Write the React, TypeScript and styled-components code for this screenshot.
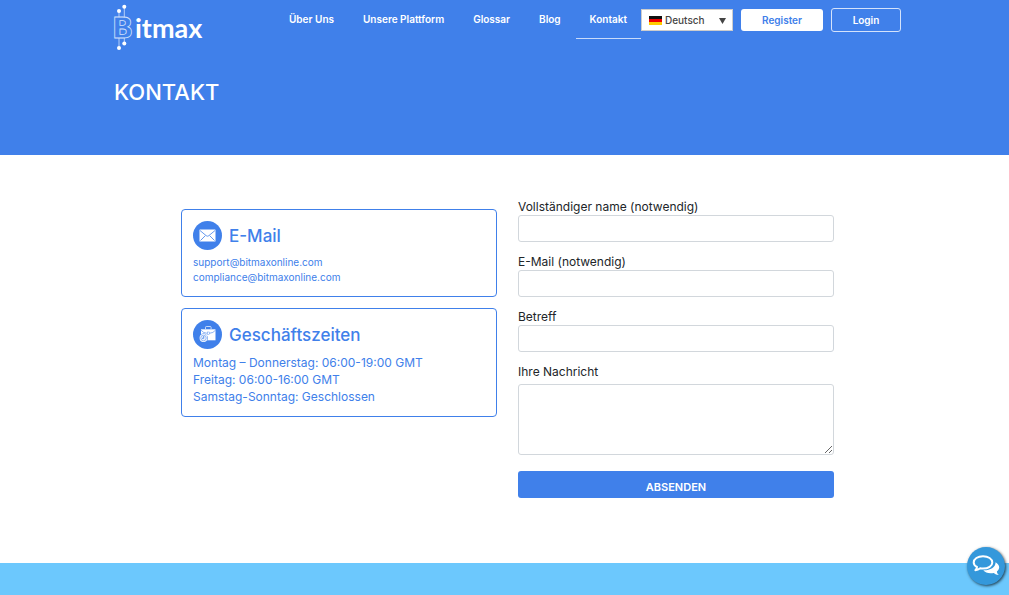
import React from 'react';
import styled, { createGlobalStyle } from 'styled-components';

const blue = '#4080ea';

const GlobalStyle = createGlobalStyle`
  * { box-sizing: border-box; }
  body {
    margin: 0;
    background: #fff;
    color: #212529;
    font-family: Inter, "Liberation Sans", sans-serif;
    font-size: 12px;
  }
  button, input, textarea, select { font: inherit; }
`;

const Page = styled.div`
  display: flex;
  flex-direction: column;
  min-height: 100vh;
  overflow-x: hidden;
`;

const Header = styled.header`
  display: flex;
  flex-direction: column;
  gap: 25px;
  padding: 0 108px 47px 111px;
  background: ${blue};
  color: #fff;
`;

const TopBar = styled.div`
  display: flex;
  align-items: flex-start;
  justify-content: space-between;
`;

const Logo = styled.a`
  display: block;
  padding-top: 3px;
  svg { display: block; }
`;

const Controls = styled.div`
  display: flex;
  align-items: flex-start;
  gap: 8px;
`;

const Menu = styled.nav`
  display: flex;
  gap: 1px;
  margin-right: -8px;
`;

const MenuLink = styled.a<{ $active?: boolean }>`
  padding: 12px 14px 12px;
  border-bottom: 1px solid ${(p) => (p.$active ? '#c9dbfa' : 'transparent')};
  color: #fff;
  font-size: 10px;
  font-weight: 600;
  line-height: 14px;
  text-decoration: none;
  white-space: nowrap;
`;

const Language = styled.div`
  position: relative;
  width: 92px;
  margin-top: 9px;
  svg { position: absolute; pointer-events: none; }
  svg:first-child { left: 8px; top: 7px; }
  svg:last-child { right: 7px; top: 9px; }
`;

const LanguageSelect = styled.select`
  display: block;
  width: 100%;
  height: 22px;
  padding: 0 20px 0 23px;
  border: 1px solid #cdcdcd;
  border-radius: 0;
  appearance: none;
  background: #fff;
  color: #444;
  font-size: 10px;
  font-weight: 500;
`;

const AccountButton = styled.button<{ $outlined?: boolean }>`
  width: ${(p) => (p.$outlined ? 70 : 82)}px;
  height: ${(p) => (p.$outlined ? 24 : 22)}px;
  margin-top: ${(p) => (p.$outlined ? 8 : 9)}px;
  padding: 0;
  border: ${(p) => (p.$outlined ? '1px solid #d5e3fb' : '0')};
  border-radius: 3px;
  background: ${(p) => (p.$outlined ? 'transparent' : '#fff')};
  color: ${(p) => (p.$outlined ? '#fff' : blue)};
  font-size: 10px;
  font-weight: 600;
`;

const PageTitle = styled.h1`
  margin: 0;
  padding-left: 3px;
  font-size: 22px;
  font-weight: 500;
  line-height: 32px;
`;

const Main = styled.main`
  display: grid;
  flex: 1 0 auto;
  grid-template-columns: 1fr 1fr;
  gap: 21px;
  align-items: start;
  padding: 44px 175px 64px 181px;
`;

const Cards = styled.div`
  display: grid;
  gap: 11px;
  padding-top: 10px;
`;

const Card = styled.section`
  padding: 11px;
  border: 1px solid ${blue};
  border-radius: 4px;
  color: ${blue};
`;

const CardHead = styled.div`
  display: flex;
  align-items: center;
  gap: 7px;
  margin-bottom: 5px;
  svg { flex: none; }
`;

const CardTitle = styled.h2`
  margin: 0;
  font-size: 17px;
  font-weight: 500;
  line-height: 24px;
`;

const MailLink = styled.a`
  display: block;
  color: ${blue};
  font-size: 10px;
  line-height: 15px;
  text-decoration: none;
`;

const Hours = styled.p`
  margin: 0;
  line-height: 17px;
`;

const Form = styled.form`
  display: grid;
  gap: 12px;
`;

const Field = styled.label`
  display: block;
  line-height: 16px;
`;

const Input = styled.input`
  display: block;
  width: 100%;
  height: 27px;
  padding: 0 8px;
  border: 1px solid #d2d7dc;
  border-radius: 3px;
`;

const Message = styled.textarea`
  display: block;
  width: 100%;
  height: 71px;
  margin: 4px 0;
  padding: 4px 8px;
  border: 1px solid #d2d7dc;
  border-radius: 3px;
  resize: vertical;
`;

const Submit = styled.button`
  height: 27px;
  padding: 4px 0 0;
  border: 0;
  border-radius: 3px;
  background: ${blue};
  color: #fff;
  font-size: 11px;
  font-weight: 600;
`;

const Footer = styled.footer`
  height: 32px;
  background: #6cc8fd;
`;

const Chat = styled.button`
  position: fixed;
  right: 4px;
  bottom: 10px;
  width: 38px;
  height: 38px;
  padding: 0;
  border: 0;
  border-radius: 50%;
  background: #3498db;
  box-shadow: 1px 1px 3px rgba(0, 0, 0, 0.7);
  svg { display: block; margin: auto; }
`;

const LogoArt = () => (
  <svg width="96" height="48" viewBox="-2 0 96 48" aria-hidden="true">
    <g fill="none" stroke="#d3e2fb" strokeWidth="0.8">
      <path d="M6 8V14.200M11.300 4V14.200M6 35V44M11.300 35V40" />
      <text x="-1" y="34.800" fontFamily="DejaVu Sans, sans-serif" fontSize="28" fontWeight="700">B</text>
    </g>
    <g fill="#fff">
      <circle cx="11.3" cy="3.7" r="2" />
      <circle cx="6" cy="8" r="2" />
      <circle cx="11.3" cy="40.5" r="2" />
      <circle cx="6" cy="45" r="2" />
      <text x="22" y="35" fontFamily="Lato, sans-serif" fontSize="27" fontWeight="700">itmax</text>
    </g>
  </svg>
);

const Flag = () => (
  <svg width="13" height="9" viewBox="0 0 13 9" aria-hidden="true">
    <path fill="#111" d="M0 0h13v3H0z" />
    <path fill="#e00" d="M0 3h13v3H0z" />
    <path fill="#fc0" d="M0 6h13v3H0z" />
  </svg>
);

const Arrow = () => (
  <svg width="7" height="6" viewBox="0 0 7 6" aria-hidden="true">
    <path fill="#444" d="M0 0h7L3.5 6z" />
  </svg>
);

const MailIcon = () => (
  <svg width="29" height="29" viewBox="0 0 29 29" aria-hidden="true">
    <circle cx="14.5" cy="14.5" r="14.5" fill={blue} />
    <rect x="6.5" y="8.5" width="16" height="12" rx="0.5" fill="#fff" />
    <path d="M7 9.5l6.2 5.2q1.3 1 2.6 0L22 9.5M7.5 19.5l4.8-4.8M21.5 19.5l-4.8-4.8" fill="none" stroke={blue} strokeWidth="0.8" />
  </svg>
);

const BriefcaseIcon = () => (
  <svg width="29" height="29" viewBox="0 0 29 29" aria-hidden="true">
    <circle cx="14.5" cy="14.5" r="14.5" fill={blue} />
    <path d="M12.500 9V7.400q0-.9.9-.9h3.800q.9 0 .9.9V9" fill="none" stroke="#fff" strokeWidth="0.7" />
    <path d="M8 9.300h14.500v11H8z" fill="#fff" />
    <path d="M8 10.200q2.500 3 5.700 3h3.100q3.200 0 5.700-3" fill="none" stroke={blue} strokeWidth="0.6" />
    <rect x="14.200" y="12" width="2.200" height="2.200" fill="#fff" stroke={blue} strokeWidth="0.4" />
    <circle cx="10.500" cy="18" r="4.400" fill={blue} />
    <circle cx="10.500" cy="18" r="3.900" fill="#fff" />
    <circle cx="10.500" cy="18" r="2.800" fill="#e8f0fd" stroke={blue} strokeWidth="0.5" />
    <path d="M10.700 16v2.300H9" fill="none" stroke={blue} strokeWidth="0.8" />
  </svg>
);

const ChatIcon = () => (
  <svg width="28" height="24" viewBox="0 0 28 24" aria-hidden="true">
    <path d="M23.6 8.2c4.5 2.7 4.6 6.7 1.3 9.2.1 1.5.8 2.5 2 3.5-2.200-.1-3.800-.8-5.100-2-4.600 1-8.500-.2-10.500-2.600 6.800.2 12.300-2.900 12.300-8.100z" fill="#fff" />
    <path d="M11 2.200c5.300 0 9.300 2.700 9.300 6.200s-4 6.200-9.300 6.200c-1 0-1.900-.1-2.800-.3-1.500 1.200-3 1.800-4.800 1.900 1-1 1.500-2 1.600-3.200C3 11.900 1.700 10.300 1.700 8.400c0-3.500 4-6.200 9.300-6.200z" fill="#3498db" stroke="#fff" strokeWidth="2" strokeLinejoin="round" />
  </svg>
);

const menu = ['Über Uns', 'Unsere Plattform', 'Glossar', 'Blog', 'Kontakt'];
const fields = [
  { label: 'Vollständiger name (notwendig)', type: 'text' },
  { label: 'E-Mail (notwendig)', type: 'email' },
  { label: 'Betreff', type: 'text' },
];

export default function App() {
  return (
    <Page>
      <GlobalStyle />
      <Header>
        <TopBar>
          <Logo href="#" aria-label="Bitmax"><LogoArt /></Logo>
          <Controls>
            <Menu>
              {menu.map((item) => (
                <MenuLink key={item} href="#" $active={item === 'Kontakt'}>{item}</MenuLink>
              ))}
            </Menu>
            <Language>
              <Flag />
              <LanguageSelect aria-label="Sprache"><option>Deutsch</option></LanguageSelect>
              <Arrow />
            </Language>
            <AccountButton type="button">Register</AccountButton>
            <AccountButton type="button" $outlined>Login</AccountButton>
          </Controls>
        </TopBar>
        <PageTitle>KONTAKT</PageTitle>
      </Header>
      <Main>
        <Cards>
          <Card>
            <CardHead><MailIcon /><CardTitle>E-Mail</CardTitle></CardHead>
            <MailLink href="mailto:support@bitmaxonline.com">support@bitmaxonline.com</MailLink>
            <MailLink href="mailto:compliance@bitmaxonline.com">compliance@bitmaxonline.com</MailLink>
          </Card>
          <Card>
            <CardHead><BriefcaseIcon /><CardTitle>Geschäftszeiten</CardTitle></CardHead>
            <Hours>Montag – Donnerstag: 06:00-19:00 GMT</Hours>
            <Hours>Freitag: 06:00-16:00 GMT</Hours>
            <Hours>Samstag-Sonntag: Geschlossen</Hours>
          </Card>
        </Cards>
        <Form onSubmit={(e) => e.preventDefault()}>
          {fields.map((f) => (
            <Field key={f.label}>{f.label}<Input type={f.type} /></Field>
          ))}
          <Field>Ihre Nachricht<Message /></Field>
          <Submit type="submit">ABSENDEN</Submit>
        </Form>
      </Main>
      <Footer />
      <Chat type="button" aria-label="Chat"><ChatIcon /></Chat>
    </Page>
  );
}
